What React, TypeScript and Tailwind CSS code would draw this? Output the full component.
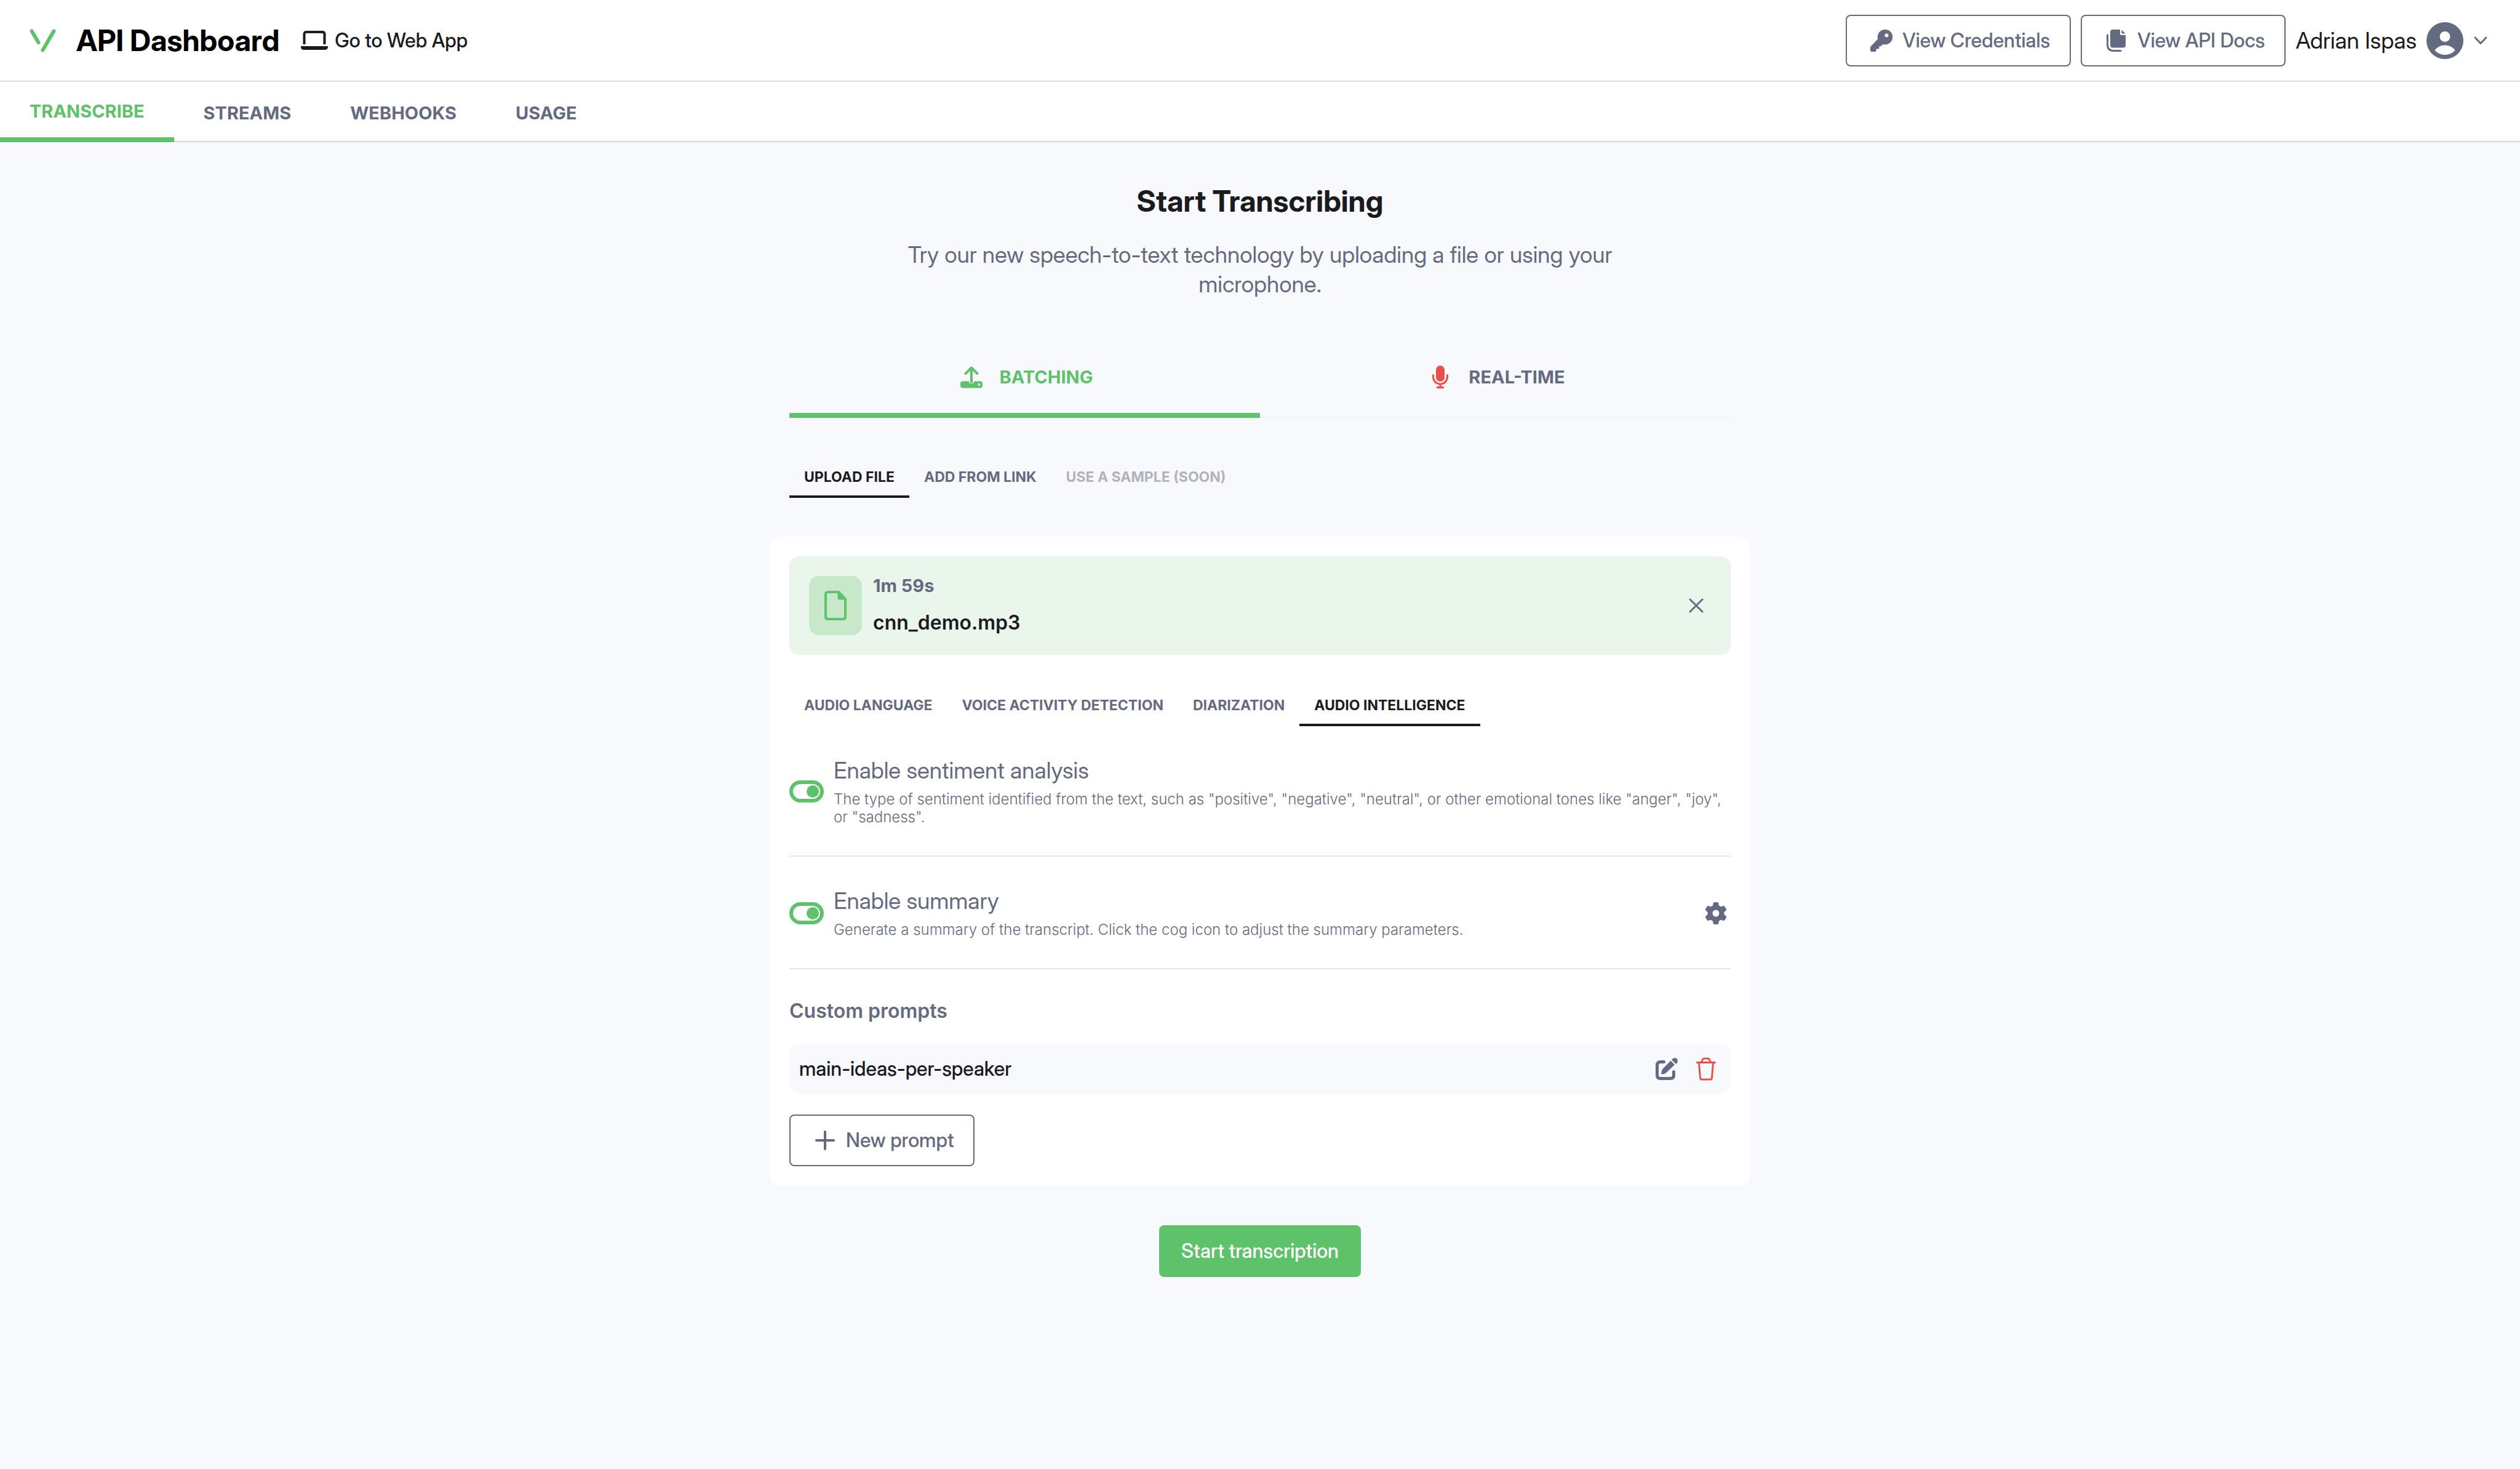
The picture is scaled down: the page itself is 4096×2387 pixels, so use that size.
import type { ReactNode } from 'react';

const navLinks = ['Transcribe', 'Streams', 'Webhooks', 'Usage'];

const sources = [
  { label: 'Upload file', active: true },
  { label: 'Add from link' },
  { label: 'Use a sample (soon)', disabled: true },
];

const settings = [
  { label: 'Audio language' },
  { label: 'Voice activity detection' },
  { label: 'Diarization' },
  { label: 'Audio intelligence', active: true },
];

const prompts = ['main-ideas-per-speaker'];

/* ---------- icons ---------- */

function Logo() {
  return (
    <svg viewBox="0 0 44 38" className="w-[44px] h-[38px]" fill="none" stroke="#5dc269" strokeWidth="6" strokeLinecap="round">
      <path d="M3.5 3.5 14.5 22M39.5 3.5 21.5 34.5" />
    </svg>
  );
}

function LaptopIcon() {
  return (
    <svg viewBox="0 0 46 32" className="w-[46px] h-[32px]">
      <path d="M6.5 22V5A3.5 3.5 0 0 1 10 2H36A3.5 3.5 0 0 1 39.5 5V22" fill="none" stroke="#1b1a1d" strokeWidth="4" />
      <path d="M1 25H45Q45.5 31 39.5 31H6.5Q.5 31 1 25Z" fill="#1b1a1d" />
    </svg>
  );
}

function KeyIcon() {
  return (
    <svg viewBox="0 0 36 36" className="w-[36px] h-[36px]">
      <path
        fillRule="evenodd"
        d="M24 0A12.2 12.2 0 1 1 21 24L19.5 24.5Q18.5 27 16.5 27H14.5V30Q14 31.5 12.5 31.5H9.5V34.5Q9 36 7.5 36H2.5Q0 36 0 33.5V29.5Q0 28 1 27L12.2 15.5A12.2 12.2 0 0 1 24 0ZM26.5 6.5A3 3 0 1 0 26.5 12.5 3 3 0 0 0 26.5 6.5Z"
        fill="currentColor"
      />
    </svg>
  );
}

function CopyIcon() {
  return (
    <svg viewBox="0 0 36 36" className="w-[36px] h-[36px]">
      <path d="M3.5 9V24.5Q3.5 34.5 13.5 34.5H25" fill="none" stroke="currentColor" strokeWidth="3" strokeLinecap="round" />
      <path d="M12 0H24V6.5Q24 9 26.5 9H33V25Q33 29.5 28.5 29.5H12Q8 29.5 8 25V4.5Q8 0 12 0Z" fill="currentColor" />
      <path d="M26.5.5 32.5 6.5H26.5Z" fill="currentColor" />
    </svg>
  );
}

function AvatarIcon() {
  return (
    <svg viewBox="0 0 60 60" className="w-[60px] h-[60px] text-[#646a80]">
      <circle cx="30" cy="30" r="30" fill="currentColor" />
      <circle cx="30" cy="23.5" r="8.5" fill="#fff" />
      <path d="M13.5 46C17 40.5 23 37.5 30 37.5S43 40.5 46.5 46C42 50.5 36 53 30 53S18 50.5 13.5 46Z" fill="#fff" />
    </svg>
  );
}

function UploadIcon() {
  return (
    <svg viewBox="0 0 36 36" className="w-[36px] h-[36px]">
      <path d="M18 26V2.5M8.5 12 18 2.5 27.5 12" fill="none" stroke="currentColor" strokeWidth="4" strokeLinecap="round" strokeLinejoin="round" />
      <path d="M4 24.5H13.5Q14.5 28.5 18 28.5T22.5 24.5H32Q36 24.5 36 28.5V31.5Q36 35.5 32 35.5H4Q0 35.5 0 31.5V28.5Q0 24.5 4 24.5Z" fill="currentColor" />
      <circle cx="30.5" cy="30" r="1.9" fill="#f8f9fd" />
    </svg>
  );
}

function MicIcon() {
  return (
    <svg viewBox="-5 0 36 38" className="w-[36px] h-[38px]" fill="none" stroke="#e8504a" strokeLinecap="round">
      <rect x="6" y="0" width="14" height="26" rx="7" fill="#e8504a" stroke="none" />
      <path d="M1.5 15.5V18.5A11.5 11.5 0 0 0 24.5 18.5V15.5M13 30V35" strokeWidth="3" />
      <path d="M8.5 35.5H17.5" strokeWidth="3.5" />
    </svg>
  );
}

function FileIcon() {
  return (
    <svg viewBox="0 0 36 48" className="w-[36px] h-[48px]">
      <path d="M6 2H23L34 13V42Q34 46 30 46H6Q2 46 2 42V6Q2 2 6 2Z" fill="none" stroke="#5dc269" strokeWidth="4" />
      <path d="M21.5 1 35 14.5H25Q21.5 14.5 21.5 11Z" fill="#5dc269" />
    </svg>
  );
}

function CogIcon() {
  return (
    <svg viewBox="0 0 36 36" className="h-[36px] w-[36px]">
      <circle cx="18" cy="18" r="9.5" fill="none" stroke="currentColor" strokeWidth="8" />
      {[0, 60, 120, 180, 240, 300].map((deg) => (
        <path key={deg} d="M12 8.5Q13.5 6 13.5 2.5 13.5 0 16 0H20Q22.5 0 22.5 2.5 22.5 6 24 8.5Z" fill="currentColor" transform={`rotate(${deg} 18 18)`} />
      ))}
    </svg>
  );
}

function EditIcon() {
  return (
    <svg viewBox="0 0 36 36" className="h-[36px] w-[36px]">
      <path d="M13.5 6.5H8Q2.5 6.5 2.5 12V28Q2.5 33.5 8 33.5H24Q29.5 33.5 29.5 28V22.5" fill="none" stroke="currentColor" strokeWidth="5" strokeLinecap="round" />
      <path d="M24.5 4.5 31 11 18 23.5Q14.5 26.8 10 26.5 9 26.3 9.2 25.5 9.5 20 12.5 17Z" fill="currentColor" />
      <path d="M26 3Q28.5 0 31 0A5 5 0 0 1 36 5Q36 7.5 33 10Z" fill="currentColor" />
    </svg>
  );
}

function TrashIcon() {
  return (
    <svg viewBox="0 0 32 38" className="w-[32px] h-[38px]" fill="none" stroke="#e8504a" strokeWidth="3" strokeLinecap="round" strokeLinejoin="round">
      <path d="M1.5 8.5H30.5M8.5 8 10.5 3.5Q11.5 2 13 2H19Q20.5 2 21.5 3.5L23.5 8M4.5 9 6.5 33.5Q6.7 36 9 36H23Q25.3 36 25.5 33.5L27.5 9" />
    </svg>
  );
}

/* ---------- controls ---------- */

function OutlineButton({ icon, children }: { icon: ReactNode; children: ReactNode }) {
  return (
    <button className="flex h-[84px] items-center gap-4 rounded-lg border-2 border-[#646a80] bg-white pl-[38px] pr-8 font-['Inter_Display','Inter',sans-serif] text-[32px] font-medium text-[#646a80]">
      {icon}
      {children}
    </button>
  );
}

function SmallTabs({ tabs }: { tabs: { label: string; active?: boolean; disabled?: boolean }[] }) {
  return (
    <div className="flex">
      {tabs.map((tab) => (
        <button
          key={tab.label}
          disabled={tab.disabled}
          className={`border-b-4 px-6 pt-6 pb-4 text-[23px] leading-[28px] font-bold uppercase ${
            tab.active
              ? 'border-[#1b1a1d] text-[#1b1a1d]'
              : tab.disabled
                ? 'border-transparent text-[#b0b2bf]'
                : 'border-transparent text-[#646a80]'
          }`}
        >
          {tab.label}
        </button>
      ))}
    </div>
  );
}

function OptionRow({ id, title, text, action }: { id: string; title: string; text: string; action?: ReactNode }) {
  return (
    <div className="flex items-center border-b-2 border-[#e4e7ee] pt-[50px] pb-12">
      <input
        id={id}
        type="checkbox"
        defaultChecked
        className="flex h-[36px] w-[56px] shrink-0 appearance-none items-center justify-end rounded-full border-[6px] border-[#5dc269] pr-0.5 before:h-5 before:w-5 before:rounded-full before:bg-[#5dc269]"
      />
      <label htmlFor={id} className="ml-4 flex-1 text-[#646a80]">
        <span className="block font-['Inter_Display','Inter',sans-serif] text-[37px] leading-[44px]">{title}</span>
        <span className="mt-2.5 block text-[24px] leading-[29px] font-light">{text}</span>
      </label>
      {action}
    </div>
  );
}

export default function App() {
  return (
    <div className="min-h-screen bg-[#f8f9fd] font-['Inter',sans-serif] text-[#1b1a1d]">

      {/* Top bar */}
      <header className="flex h-[133px] items-center border-b-2 border-[#d9d9d9] bg-white pl-12 pr-[52px] font-['Inter_Display','Inter',sans-serif]">
        <Logo />
        <h2 className="ml-8 text-[48px] font-bold text-black">API Dashboard</h2>
        <a href="#app" className="ml-[34px] flex items-center gap-2.5 text-[32px] font-medium">
          <LaptopIcon />
          Go to Web App
        </a>
        <div className="ml-auto flex items-center gap-4">
          <OutlineButton icon={<KeyIcon />}>View Credentials</OutlineButton>
          <OutlineButton icon={<CopyIcon />}>View API Docs</OutlineButton>
          <button className="flex items-center gap-4 text-[37px]">
            Adrian Ispas
            <AvatarIcon />
            <svg viewBox="0 0 24 16" className="h-[16px] w-[24px]" fill="none" stroke="#646a80" strokeWidth="3" strokeLinecap="round" strokeLinejoin="round">
              <path d="M3 3 12 12.5 21 3" />
            </svg>
          </button>
        </div>
      </header>

      {/* Section nav */}
      <nav className="flex h-[98px] bg-white text-[29px] font-bold uppercase">
        {navLinks.map((link, i) => (
          <a
            key={link}
            href={`#${link.toLowerCase()}`}
            className={`flex items-center px-12 pt-1.5 ${
              i === 0 ? 'border-b-8 border-[#5dc269] text-[#5dc269]' : 'border-b-2 border-[#d9d9d9] text-[#646a80]'
            }`}
          >
            {link}
          </a>
        ))}
        <span className="flex-1 border-b-2 border-[#d9d9d9]" />
      </nav>

      <main className="mx-auto flex max-w-[1594px] flex-col pt-[67px] pb-16">
        <h1 className="text-center font-['Inter_Display','Inter',sans-serif] text-[48px] leading-[58px] font-bold">Start Transcribing</h1>
        <p className="mx-auto mt-[34px] max-w-[1200px] text-center font-['Inter_Display','Inter',sans-serif] text-[37px] leading-[48px] text-[#646a80]">
          Try our new speech-to-text technology by uploading a file or using your microphone.
        </p>

        <div className="mx-8 mt-[72px] grid grid-cols-2 text-[29px] leading-[36px] font-bold">
          <button className="flex items-center justify-center gap-7 border-b-8 border-[#5dc269] pt-9 pb-[39px] pl-1.5 uppercase text-[#5dc269]">
            <UploadIcon />
            Batching
          </button>
          <button className="flex items-center justify-center gap-7 border-b-2 border-[#f2f3f6] pt-9 pb-[45px] pl-1.5 uppercase text-[#646a80]">
            <MicIcon />
            Real-time
          </button>
        </div>

        <div className="mx-8 mt-[58px]">
          <SmallTabs tabs={sources} />
        </div>

        {/* Job card */}
        <section className="mt-[63px] rounded-2xl bg-white p-8">
          <div className="flex items-center rounded-2xl bg-[#eaf5eb] p-8">
            <div className="flex h-[96px] w-[86px] items-center justify-center rounded-2xl bg-[#c7e9ca]">
              <FileIcon />
            </div>
            <div className="ml-[18px] self-start">
              <div className="text-[29px] leading-[32px] font-bold text-[#646a80]">1m 59s</div>
              <div className="mt-6 text-[32px] leading-[40px] font-semibold">cnn_demo.mp3</div>
            </div>
            <button aria-label="Remove file" className="ml-auto p-3">
              <svg viewBox="0 0 24 24" className="h-[24px] w-[24px]" fill="none" stroke="#646a80" strokeWidth="3" strokeLinecap="round">
                <path d="M2 2 22 22M22 2 2 22" />
              </svg>
            </button>
          </div>

          <div className="mt-11">
            <SmallTabs tabs={settings} />
          </div>

          <OptionRow
            id="sentiment"
            title="Enable sentiment analysis"
            text={'The type of sentiment identified from the text, such as "positive", "negative", "neutral", or other emotional tones like "anger", "joy", or "sadness".'}
          />
          <OptionRow
            id="summary"
            title="Enable summary"
            text="Generate a summary of the transcript. Click the cog icon to adjust the summary parameters."
            action={
              <button aria-label="Summary settings" className="px-1.5 text-[#646a80]">
                <CogIcon />
              </button>
            }
          />

          <h3 className="mt-12 text-[32px] leading-[40px] font-semibold text-[#646a80]">Custom prompts</h3>
          {prompts.map((name) => (
            <div key={name} className="mt-[34px] flex h-[80px] items-center rounded-2xl bg-[#f8f9fd] px-4">
              <span className="font-['Inter_Display','Inter',sans-serif] text-[32px] leading-[40px] font-medium">{name}</span>
              <button aria-label="Edit prompt" className="ml-auto px-2 text-[#646a80]">
                <EditIcon />
              </button>
              <button aria-label="Delete prompt" className="ml-[22px] mr-2">
                <TrashIcon />
              </button>
            </div>
          ))}
          <div className="mt-[34px] flex">
            <OutlineButton
              icon={
                <svg viewBox="0 0 36 36" className="h-[36px] w-[36px]" fill="none" stroke="currentColor" strokeWidth="4" strokeLinecap="round">
                  <path d="M18 4V32M4 18H32" />
                </svg>
              }
            >
              New prompt
            </OutlineButton>
          </div>
        </section>

        <button className="mx-auto mt-16 h-[84px] rounded-lg bg-[#5dc269] px-9 font-['Inter_Display','Inter',sans-serif] text-[32px] font-medium text-white">
          Start transcription
        </button>
      </main>
    </div>
  );
}
